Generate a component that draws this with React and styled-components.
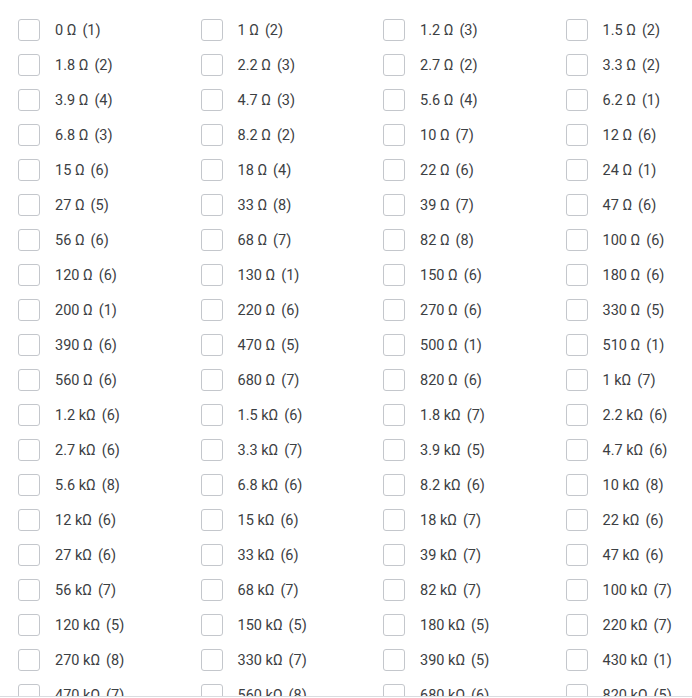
import React from 'react';
import styled, { createGlobalStyle } from 'styled-components';

const GlobalStyle = createGlobalStyle`
    html, body {
        margin: 0;
        overflow: hidden;
        background: #fff;
        font-family: Roboto, "Liberation Sans", sans-serif;
    }
`;

const Panel = styled.div`
    height: 696px;
    overflow: hidden;
    border-bottom: 1px solid #dadce0;
`;

const Grid = styled.ul`
    list-style: none;
    margin: 0;
    padding: 19px 0 0 18px;
    display: grid;
    grid-template-columns: repeat(3, 182.5px) 1fr;
    grid-auto-rows: 35px;
`;

const Option = styled.li`
    display: flex;
    align-items: flex-start;
    gap: 15px;
    color: #3c4043;
    font-size: 14.5px;
    line-height: 22px;
    white-space: nowrap;
`;

const Box = styled.span`
    flex: none;
    width: 20px;
    height: 20px;
    border: 1px solid #c4c7cc;
    border-radius: 3px;
    background: #fff;
`;

const Label = styled.span`
    padding-top: 1px;
`;

const Count = styled.span`
    margin-left: 6px;
`;

const options = [
    ['0 Ω', 1], ['1 Ω', 2], ['1.2 Ω', 3], ['1.5 Ω', 2],
    ['1.8 Ω', 2], ['2.2 Ω', 3], ['2.7 Ω', 2], ['3.3 Ω', 2],
    ['3.9 Ω', 4], ['4.7 Ω', 3], ['5.6 Ω', 4], ['6.2 Ω', 1],
    ['6.8 Ω', 3], ['8.2 Ω', 2], ['10 Ω', 7], ['12 Ω', 6],
    ['15 Ω', 6], ['18 Ω', 4], ['22 Ω', 6], ['24 Ω', 1],
    ['27 Ω', 5], ['33 Ω', 8], ['39 Ω', 7], ['47 Ω', 6],
    ['56 Ω', 6], ['68 Ω', 7], ['82 Ω', 8], ['100 Ω', 6],
    ['120 Ω', 6], ['130 Ω', 1], ['150 Ω', 6], ['180 Ω', 6],
    ['200 Ω', 1], ['220 Ω', 6], ['270 Ω', 6], ['330 Ω', 5],
    ['390 Ω', 6], ['470 Ω', 5], ['500 Ω', 1], ['510 Ω', 1],
    ['560 Ω', 6], ['680 Ω', 7], ['820 Ω', 6], ['1 kΩ', 7],
    ['1.2 kΩ', 6], ['1.5 kΩ', 6], ['1.8 kΩ', 7], ['2.2 kΩ', 6],
    ['2.7 kΩ', 6], ['3.3 kΩ', 7], ['3.9 kΩ', 5], ['4.7 kΩ', 6],
    ['5.6 kΩ', 8], ['6.8 kΩ', 6], ['8.2 kΩ', 6], ['10 kΩ', 8],
    ['12 kΩ', 6], ['15 kΩ', 6], ['18 kΩ', 7], ['22 kΩ', 6],
    ['27 kΩ', 6], ['33 kΩ', 6], ['39 kΩ', 7], ['47 kΩ', 6],
    ['56 kΩ', 7], ['68 kΩ', 7], ['82 kΩ', 7], ['100 kΩ', 7],
    ['120 kΩ', 5], ['150 kΩ', 5], ['180 kΩ', 5], ['220 kΩ', 7],
    ['270 kΩ', 8], ['330 kΩ', 7], ['390 kΩ', 5], ['430 kΩ', 1],
    ['470 kΩ', 7], ['560 kΩ', 8], ['680 kΩ', 6], ['820 kΩ', 5],
];

const App = () => (
    <>
        <GlobalStyle />
        <Panel>
            <Grid>
                {options.map(([value, count]) => (
                    <Option key={value}>
                        <Box />
                        <Label>
                            {value}
                            <Count>({count})</Count>
                        </Label>
                    </Option>
                ))}
            </Grid>
        </Panel>
    </>
);

export default App;
